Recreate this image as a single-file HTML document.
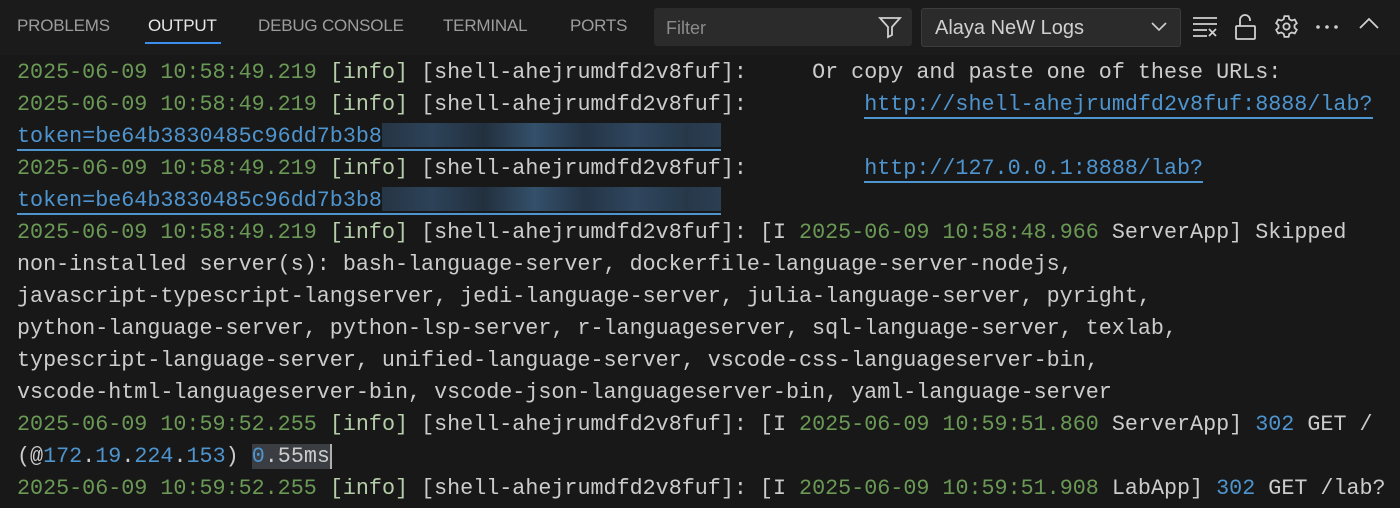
<!DOCTYPE html>
<html><head><meta charset="utf-8"><style>
html,body{margin:0;padding:0;width:1400px;height:508px;overflow:hidden;background:#181818;}
.hdr{position:absolute;left:0;top:0;width:1400px;height:55px;background:#1b1b1b;font-family:"Liberation Sans",sans-serif;}
.tab{position:absolute;top:16px;font-size:17px;color:#9d9d9d;letter-spacing:-0.2px}
.tab.act{color:#e7e7e7}
.ul{position:absolute;left:145px;top:42px;width:76px;height:2px;background:#3b8eea}
.filter{position:absolute;left:654px;top:8px;width:258px;height:38px;background:#2b2b2b;border-radius:3px}
.filter span{position:absolute;left:12px;top:10px;font-size:18px;color:#8b8b8b}
.sel{position:absolute;left:921px;top:8px;width:258px;height:37px;background:#2b2b2b;border:1px solid #3c3c3c;border-radius:3px}
.sel span{position:absolute;left:13px;top:8px;font-size:20px;color:#d0d0d0}
.body{position:absolute;left:17px;top:57px;font-family:"Liberation Mono",monospace;font-size:21.73px;line-height:32px;color:#cccccc}
.l{height:32px;position:relative;white-space:pre}
.g{color:#6a9955}.i{color:#b5cea8}.b{color:#4e94ce}
.a{color:#4e94ce;border-bottom:2px solid #4e94ce}
.blur{display:inline-block;width:339px;height:24px;vertical-align:-5px;background:linear-gradient(90deg,#263545 0%,#2d4258 15%,#22303e 30%,#34506a 45%,#253547 60%,#2f465e 75%,#273849 90%,#2b3f53 100%)}
.sel2{background:#3a3d41}
</style></head><body>
<div class="hdr">
<div class="tab" style="left:17px">PROBLEMS</div>
<div class="tab act" style="left:148px">OUTPUT</div>
<div class="ul"></div>
<div class="tab" style="left:258px">DEBUG CONSOLE</div>
<div class="tab" style="left:443px">TERMINAL</div>
<div class="tab" style="left:570px">PORTS</div>
<div class="filter"><span>Filter</span>
<svg style="position:absolute;left:224px;top:7px" width="24" height="24" viewBox="0 0 24 24" fill="none" stroke="#d0d0d0" stroke-width="1.8"><path d="M2 3h20l-8 9v8l-4 2v-10z"/></svg></div>
<div class="sel"><span>Alaya NeW Logs</span>
<svg style="position:absolute;left:228px;top:11px" width="18" height="14" viewBox="0 0 18 14" fill="none" stroke="#d0d0d0" stroke-width="1.6"><path d="M2 3l7 7 7-7"/></svg></div>
<svg style="position:absolute;left:1192px;top:15px" width="26" height="24" viewBox="0 0 26 24" fill="none" stroke="#d0d0d0" stroke-width="1.8"><path d="M1 3h24M1 9h24M1 15h14M1 21h14M17 14l7 7M24 14l-7 7"/></svg>
<svg style="position:absolute;left:1234px;top:13px" width="24" height="28" viewBox="0 0 24 28" fill="none" stroke="#d0d0d0" stroke-width="1.8"><rect x="2" y="13" width="19" height="13" rx="1"/><path d="M6 13V7a5 5 0 0 1 10 0v1"/></svg>
<svg style="position:absolute;left:1274px;top:14px" width="25" height="25" viewBox="0 0 24 24" fill="none" stroke="#d0d0d0" stroke-width="1.7"><circle cx="12" cy="12" r="3"/><path d="M10 2h4l.7 3 2.3 1.3 2.9-1 2 3.5-2.2 2v2.4l2.2 2-2 3.5-2.9-1-2.3 1.3-.7 3h-4l-.7-3-2.3-1.3-2.9 1-2-3.5 2.2-2v-2.4l-2.2-2 2-3.5 2.9 1L9.3 5z"/></svg>
<svg style="position:absolute;left:1315px;top:24px" width="24" height="6" viewBox="0 0 24 6" fill="#d0d0d0"><circle cx="3" cy="3" r="1.8"/><circle cx="12" cy="3" r="1.8"/><circle cx="21" cy="3" r="1.8"/></svg>
<svg style="position:absolute;left:1358px;top:17px" width="22" height="14" viewBox="0 0 22 14" fill="none" stroke="#d0d0d0" stroke-width="1.8"><path d="M2 11l9-9 9 9"/></svg>
</div>
<div class="body"><div class="l"><span class="g">2025-06-09 10:58:49.219</span> <span class="i">[info]</span> [shell-ahejrumdfd2v8fuf]:     Or copy and paste one of these URLs:</div><div class="l"><span class="g">2025-06-09 10:58:49.219</span> <span class="i">[info]</span> [shell-ahejrumdfd2v8fuf]:         <span class="a">http://shell-ahejrumdfd2v8fuf:8888/lab?</span></div><div class="l"><span class="a">token=be64b3830485c96dd7b3b8<span class="blur"></span></span></div><div class="l"><span class="g">2025-06-09 10:58:49.219</span> <span class="i">[info]</span> [shell-ahejrumdfd2v8fuf]:         <span class="a">http://127.0.0.1:8888/lab?</span></div><div class="l"><span class="a">token=be64b3830485c96dd7b3b8<span class="blur"></span></span></div><div class="l"><span class="g">2025-06-09 10:58:49.219</span> <span class="i">[info]</span> [shell-ahejrumdfd2v8fuf]: [I <span class="g">2025-06-09 10:58:48.966</span> ServerApp] Skipped</div><div class="l">non-installed server(s): bash-language-server, dockerfile-language-server-nodejs,</div><div class="l">javascript-typescript-langserver, jedi-language-server, julia-language-server, pyright,</div><div class="l">python-language-server, python-lsp-server, r-languageserver, sql-language-server, texlab,</div><div class="l">typescript-language-server, unified-language-server, vscode-css-languageserver-bin,</div><div class="l">vscode-html-languageserver-bin, vscode-json-languageserver-bin, yaml-language-server</div><div class="l"><span class="g">2025-06-09 10:59:52.255</span> <span class="i">[info]</span> [shell-ahejrumdfd2v8fuf]: [I <span class="g">2025-06-09 10:59:51.860</span> ServerApp] <span class="b">302</span> GET /</div><div class="l">(@<span class="b">172</span>.<span class="b">19</span>.<span class="b">224</span>.<span class="b">153</span>) <span class="sel2"><span class="b">0</span>.55ms</span><span style="border-left:2px solid #aeafad"></span></div><div class="l"><span class="g">2025-06-09 10:59:52.255</span> <span class="i">[info]</span> [shell-ahejrumdfd2v8fuf]: [I <span class="g">2025-06-09 10:59:51.908</span> LabApp] <span class="b">302</span> GET /lab?</div></div>
</body></html>
